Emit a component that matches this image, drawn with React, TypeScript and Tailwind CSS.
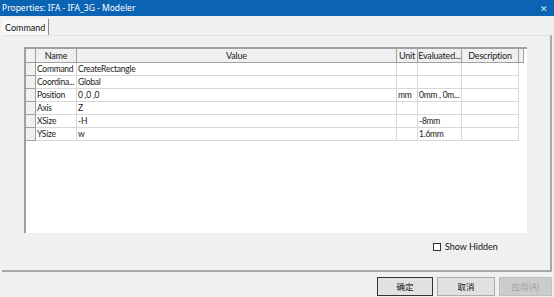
import * as React from 'react';

type Row = {
  name: string;
  value: string;
  unit: string;
  evaluated: string;
  description: string;
};

const rows: Row[] = [
  { name: 'Command', value: 'CreateRectangle', unit: '', evaluated: '', description: '' },
  { name: 'Coordina...', value: 'Global', unit: '', evaluated: '', description: '' },
  { name: 'Position', value: '0 ,0 ,0', unit: 'mm', evaluated: '0mm , 0m...', description: '' },
  { name: 'Axis', value: 'Z', unit: '', evaluated: '', description: '' },
  { name: 'XSize', value: '-H', unit: '', evaluated: '-8mm', description: '' },
  { name: 'YSize', value: 'w', unit: '', evaluated: '1.6mm', description: '' },
];

const cols = 'grid grid-cols-[10px_41px_320px_21px_44px_57px_5px]';

function HeaderCell({ children }: { children?: React.ReactNode }) {
  return (
    <div className="flex h-[14px] items-center justify-center overflow-hidden border-r border-b border-[#a0a0a0] bg-[#f0f0f0] tracking-[-0.2px] whitespace-nowrap text-[#1a1a1a]">
      {children}
    </div>
  );
}

function Cell({ children }: { children?: React.ReactNode }) {
  return (
    <div className="flex h-[13px] items-center overflow-hidden border-r border-b border-[#d8d8d8] bg-white pl-[1px] text-[8.5px] tracking-[-0.25px] whitespace-nowrap text-[#1a1a1a]">
      {children}
    </div>
  );
}

export default function App() {
  return (
    <div className="flex h-[297px] w-[554px] flex-col overflow-hidden bg-[#f0f0f0] font-['Lato',sans-serif] text-[9px] leading-none">
      {/* Title bar */}
      <div className="flex h-[16px] shrink-0 items-center justify-between bg-[#0a63b3] pr-[6px] pl-[2px] font-['Noto_Sans',sans-serif] text-[8.5px] text-white">
        <span>Properties: IFA - IFA_3G - Modeler</span>
        <span className="text-[9px] text-[#dce8f5]">✕</span>
      </div>

      {/* Tab strip */}
      <div className="flex h-[19px] shrink-0 items-end pl-[2px]">
        <div className="flex h-[16px] items-center border-r border-[#8a8a8a] bg-[#f7f7f7] pr-[3px] pl-[3px] text-[9px] text-[#111]">
          Command
        </div>
      </div>

      {/* Tab panel */}
      <div className="mx-[2px] flex h-[237px] shrink-0 flex-col border-t border-r-2 border-b-2 border-t-[#e3e3e3] border-r-[#a8a8a8] border-b-[#a8a8a8] pt-[11px] pl-[22px]">
        <div className="h-[186px] w-[503px] border-t-2 border-l-2 border-[#a0a0a0] bg-white">
          <div className={cols}>
            <HeaderCell />
            <HeaderCell>Name</HeaderCell>
            <HeaderCell>Value</HeaderCell>
            <HeaderCell>Unit</HeaderCell>
            <HeaderCell>Evaluated...</HeaderCell>
            <HeaderCell>Description</HeaderCell>
            <HeaderCell />
          </div>
          {rows.map(r => (
            <div key={r.name} className={cols}>
              <div className="h-[13px] border-r border-b border-[#a0a0a0] bg-[#f0f0f0]" />
              <Cell>{r.name}</Cell>
              <Cell>{r.value}</Cell>
              <Cell>{r.unit}</Cell>
              <Cell>{r.evaluated}</Cell>
              <Cell>{r.description}</Cell>
              <div />
            </div>
          ))}
        </div>

        <div className="mt-[9px] ml-[409px] flex items-center gap-[4px] text-[9px] text-[#111]">
          <span className="h-[8px] w-[8px] border border-[#333] bg-white" />
          <span>Show Hidden</span>
        </div>
      </div>

      {/* Buttons */}
      <div className="mt-[5px] flex justify-end gap-[4px] pr-[2px] font-['Noto_Sans_CJK_SC',sans-serif] text-[8.5px]">
        <button type="button" className="h-[19px] w-[56px] border border-[#333] bg-[#e1e1e1] text-[#111]">确定</button>
        <button type="button" className="h-[19px] w-[58px] border border-[#adadad] bg-[#e1e1e1] text-[#111]">取消</button>
        <button type="button" disabled className="h-[19px] w-[53px] border border-[#bfbfbf] bg-[#cccccc] text-[#a0a0a0]">应用(A)</button>
      </div>
    </div>
  );
}
